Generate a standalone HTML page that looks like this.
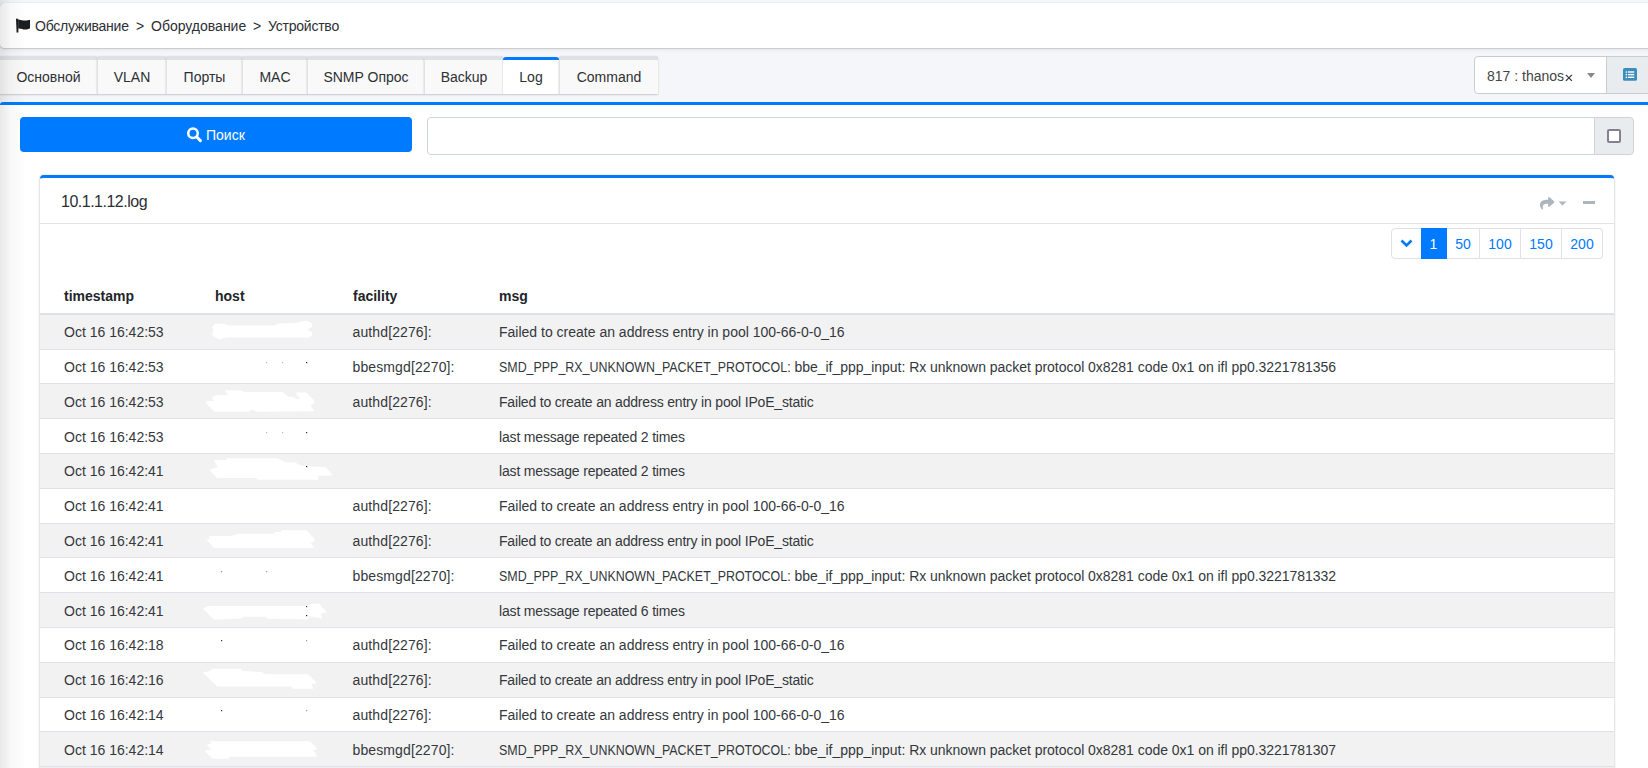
<!DOCTYPE html>
<html><head><meta charset="utf-8">
<style>
*{box-sizing:border-box;margin:0;padding:0}
html,body{width:1648px;height:768px;overflow:hidden}
body{background:#fff;font-family:"Liberation Sans",sans-serif;font-size:14px;color:#212529;position:relative}
.abs{position:absolute}
#topbg{left:0;top:0;width:1648px;height:105px;background:#f4f6f9}
#crumb{left:0;top:3px;width:1660px;height:45px;background:#fff;border-radius:4px;box-shadow:0 0 1px rgba(0,0,0,.3),0 1px 1px rgba(0,0,0,.12),0 2px 4px rgba(0,0,0,.06)}
#crumb .t{position:absolute;left:35px;top:15px;line-height:16px;white-space:pre;color:#2c3034}
.tab{position:absolute;top:56px;height:38px;background:#f9f9f9;border-top:4px solid #dee1e5;border-radius:3px 3px 0 0;box-shadow:0 0 1px rgba(0,0,0,.15),0 1px 2px rgba(0,0,0,.18);text-align:center;line-height:16px;padding-top:9px;color:#2c3034}
.tab.sep{border-left:1px solid #e2e2e2}
.tab.act{background:#fff;border-top-color:#007bff;top:57px;height:37px;border-top-width:3px}
#blue{left:0;top:102px;width:1648px;height:3px;background:#007bff;border-radius:3px 0 0 0}
#content{left:0;top:105px;width:1648px;height:663px;background:#fff}
#leftshade{left:0;top:0;width:26px;height:768px;background:linear-gradient(to right,rgba(0,0,0,.09),rgba(0,0,0,.03) 40%,rgba(0,0,0,0));pointer-events:none;z-index:50}
#sel{left:1474px;top:56px;width:133px;height:38px;background:#fff;border:1px solid #c9cdd2;border-radius:4px 0 0 4px}
#sel .v{position:absolute;left:12px;top:11px;line-height:16px;color:#444;white-space:pre}
#sel .car{position:absolute;left:112px;top:16px;width:0;height:0;border-left:4px solid transparent;border-right:4px solid transparent;border-top:5px solid #888}
#seladd{left:1606px;top:56px;width:50px;height:38px;background:#e9ecef;border:1px solid #c9cdd2}
#btn{left:20px;top:117px;width:392px;height:35px;background:#007bff;border-radius:4px;color:#fff}
#btn .t{position:absolute;left:186px;top:10px;line-height:16px}
#inp{left:427px;top:117px;width:1168px;height:38px;background:#fff;border:1px solid #ced4da;border-radius:4px 0 0 4px}
#inpadd{left:1594px;top:117px;width:40px;height:38px;background:#e9ecef;border:1px solid #ced4da;border-radius:0 4px 4px 0}
#chk{position:absolute;left:12px;top:11px;width:14px;height:14px;border:2px solid #85828f;border-radius:2px;background:#fff}
#card{left:40px;top:175px;width:1574px;height:620px;background:#fff;border-top:3px solid #007bff;border-radius:4px 4px 0 0;box-shadow:0 0 1px rgba(0,0,0,.3),0 1px 3px rgba(0,0,0,.2)}
#ctitle{position:absolute;left:21px;top:14px;font-size:16px;letter-spacing:-0.5px;line-height:20px;color:#2c3034;white-space:pre}
#chead{position:absolute;left:0;top:45px;width:100%;height:1px;background:#e3e3e3}
.pg{position:absolute;top:50px;height:31px;border:1px solid #dee2e6;border-left:none;color:#007bff;text-align:center;line-height:16px;padding-top:7px}
.th{position:absolute;top:110px;font-weight:bold;line-height:16px}
#thb{position:absolute;left:0;top:135px;width:100%;height:2px;background:#dee2e6}
.row{position:absolute;left:0;width:100%;border-top:1px solid #dee2e6}
.row.g{background:#f2f2f2}
.c{position:absolute;top:9px;line-height:16px;white-space:pre;color:#34383c}
.blob{position:absolute;background:#fff;border-radius:6px}
.up{display:inline-block;transform:scaleX(0.8875);transform-origin:0 0;width:291.6px}
.rest{letter-spacing:-0.03px}
.ipoe{letter-spacing:-0.19px}
.lastm{letter-spacing:-0.17px}
</style></head>
<body>
<div id="topbg" class="abs"></div>
<div id="crumb" class="abs">
  <svg class="abs" style="left:15px;top:15px" width="16" height="16" viewBox="0 0 16 16"><path d="M1 1.2 Q1 0.6 1.8 0.6 Q2.8 0.6 3.4 1.4 L3.4 14.6 L1.6 14.6 Z" fill="#1b1e21"/><path d="M3.2 1.8 C6 1.2 7.5 2.8 10 2.6 C12 2.5 13.5 2 15 2 L15 10.4 C13.5 10.5 12 11.6 10 11.6 C7.5 11.6 6 10.2 3.2 10.6 Z" fill="#1b1e21"/></svg>
  <div class="t" style="left:35px;letter-spacing:-0.25px">Обслуживание</div>
  <div class="t" style="left:136px">&gt;</div>
  <div class="t" style="left:151px">Оборудование</div>
  <div class="t" style="left:253px">&gt;</div>
  <div class="t" style="left:268px;letter-spacing:-0.23px">Устройство</div>
</div>
<div class="tab" style="left:0;width:97px">Основной</div>
<div class="tab sep" style="left:97px;width:69px">VLAN</div>
<div class="tab sep" style="left:166px;width:76px">Порты</div>
<div class="tab sep" style="left:242px;width:65px">MAC</div>
<div class="tab sep" style="left:307px;width:117px">SNMP Опрос</div>
<div class="tab sep" style="left:424px;width:79px">Backup</div>
<div class="tab act" style="left:503px;width:56px">Log</div>
<div class="tab sep" style="left:559px;width:99px">Command</div>
<div id="sel" class="abs"><div class="v">817 : thanos</div><svg style="position:absolute;left:90px;top:16.6px" width="8" height="8" viewBox="0 0 8 8"><path d="M0.9 0.9 L6.9 6.9 M6.9 0.9 L0.9 6.9" stroke="#3a3a3a" stroke-width="1.3"/></svg><div class="car"></div></div>
<div id="seladd" class="abs">
 <svg style="position:absolute;left:16px;top:11px" width="14" height="13" viewBox="0 0 14 13"><rect x="0" y="0" width="14" height="12.8" rx="1.6" fill="#3c8dbc"/><circle cx="3.4" cy="4" r="0.85" fill="#fff"/><circle cx="3.4" cy="6.6" r="0.85" fill="#fff"/><circle cx="3.4" cy="9.3" r="0.85" fill="#fff"/><rect x="5" y="3.3" width="6.2" height="1.4" fill="#fff"/><rect x="5" y="5.9" width="6.2" height="1.4" fill="#fff"/><rect x="5" y="8.6" width="6.2" height="1.4" fill="#fff"/></svg>
</div>
<div id="blue" class="abs"></div>
<div id="content" class="abs"></div>

<div id="btn" class="abs"><svg style="position:absolute;left:167px;top:10px" width="16" height="16" viewBox="0 0 16 16"><circle cx="6" cy="6.2" r="4.75" fill="none" stroke="#fff" stroke-width="2.5"/><path d="M9.6 9.8 L13.4 13.6" stroke="#fff" stroke-width="3" stroke-linecap="round"/></svg><div class="t">Поиск</div></div>
<div id="inp" class="abs"></div>
<div id="inpadd" class="abs"><div id="chk"></div></div>
<div id="card" class="abs">
 <div id="ctitle">10.1.1.12.log</div>
 <svg style="position:absolute;left:1500px;top:17.6px" width="14.5" height="14.5" viewBox="0 0 512 512"><path d="M503.691 189.836L327.687 37.851C312.281 24.546 288 35.347 288 56.015v80.053C127.371 137.907 0 170.1 0 322.326c0 61.441 39.581 122.309 83.333 154.132 13.653 9.931 33.111-2.533 28.077-18.631C66.066 312.814 132.917 274.316 288 272.085V360c0 20.7 24.3 31.453 39.687 18.164l176.004-152c11.071-9.562 11.086-26.753 0-36.328z" fill="#adb5bd"/></svg><svg style="position:absolute;left:1518px;top:22.5px" width="9" height="5" viewBox="0 0 9 5"><path d="M0.5 0.5 L8.5 0.5 L4.5 4.5 Z" fill="#adb5bd"/></svg>
 <div style="position:absolute;left:1543px;top:23px;width:12px;height:3px;background:#adb5bd"></div>
 <div id="chead"></div>
 <div class="pg" style="left:1351px;width:31px;border-left:1px solid #dee2e6;border-radius:4px 0 0 4px"><svg style="position:absolute;left:8px;top:10px" width="13" height="9" viewBox="0 0 13 9"><path d="M1.5 1.5 L6.5 6.5 L11.5 1.5" fill="none" stroke="#007bff" stroke-width="2.6"/></svg></div>
 <div class="pg" style="left:1381px;width:26px;background:#007bff;border-color:#007bff;color:#fff">1</div>
 <div class="pg" style="left:1407px;width:33px">50</div>
 <div class="pg" style="left:1440px;width:41px">100</div>
 <div class="pg" style="left:1481px;width:41px">150</div>
 <div class="pg" style="left:1522px;width:41px;border-radius:0 4px 4px 0">200</div>
 <div class="th" style="left:24px">timestamp</div>
 <div class="th" style="left:175px">host</div>
 <div class="th" style="left:313px">facility</div>
 <div class="th" style="left:459px">msg</div>
 <div id="thb"></div>
<div class="row g" style="top:137px;height:34px;border-top:none;"><div class="c" style="top:9px;left:24px">Oct 16 16:42:53</div><div class="c" style="top:9px;left:312.5px;letter-spacing:0.12px">authd[2276]:</div><div class="c" style="top:9px;left:459px">Failed to create an address entry in pool 100-66-0-0_16</div></div>
<div class="row" style="top:171px;height:34px;"><div class="c" style="top:9px;left:24px">Oct 16 16:42:53</div><div class="c" style="top:9px;left:312.5px;letter-spacing:0.12px">bbesmgd[2270]:</div><div class="c" style="top:9px;left:459px"><span class="up">SMD_PPP_RX_UNKNOWN_PACKET_PROTOCOL:</span> <span class="rest">bbe_if_ppp_input: Rx unknown packet protocol 0x8281 code 0x1 on ifl pp0.3221781356</span></div></div>
<div class="row g" style="top:205px;height:35px;"><div class="c" style="top:10px;left:24px">Oct 16 16:42:53</div><div class="c" style="top:10px;left:312.5px;letter-spacing:0.12px">authd[2276]:</div><div class="c ipoe" style="top:10px;left:459px">Failed to create an address entry in pool IPoE_static</div></div>
<div class="row" style="top:240px;height:35px;"><div class="c" style="top:10px;left:24px">Oct 16 16:42:53</div><div class="c" style="top:10px;left:312.5px;letter-spacing:0.12px"></div><div class="c lastm" style="top:10px;left:459px">last message repeated 2 times</div></div>
<div class="row g" style="top:275px;height:35px;"><div class="c" style="top:9px;left:24px">Oct 16 16:42:41</div><div class="c" style="top:9px;left:312.5px;letter-spacing:0.12px"></div><div class="c lastm" style="top:9px;left:459px">last message repeated 2 times</div></div>
<div class="row" style="top:310px;height:35px;"><div class="c" style="top:9px;left:24px">Oct 16 16:42:41</div><div class="c" style="top:9px;left:312.5px;letter-spacing:0.12px">authd[2276]:</div><div class="c" style="top:9px;left:459px">Failed to create an address entry in pool 100-66-0-0_16</div></div>
<div class="row g" style="top:345px;height:34px;"><div class="c" style="top:9px;left:24px">Oct 16 16:42:41</div><div class="c" style="top:9px;left:312.5px;letter-spacing:0.12px">authd[2276]:</div><div class="c ipoe" style="top:9px;left:459px">Failed to create an address entry in pool IPoE_static</div></div>
<div class="row" style="top:379px;height:35px;"><div class="c" style="top:10px;left:24px">Oct 16 16:42:41</div><div class="c" style="top:10px;left:312.5px;letter-spacing:0.12px">bbesmgd[2270]:</div><div class="c" style="top:10px;left:459px"><span class="up">SMD_PPP_RX_UNKNOWN_PACKET_PROTOCOL:</span> <span class="rest">bbe_if_ppp_input: Rx unknown packet protocol 0x8281 code 0x1 on ifl pp0.3221781332</span></div></div>
<div class="row g" style="top:414px;height:35px;"><div class="c" style="top:10px;left:24px">Oct 16 16:42:41</div><div class="c" style="top:10px;left:312.5px;letter-spacing:0.12px"></div><div class="c lastm" style="top:10px;left:459px">last message repeated 6 times</div></div>
<div class="row" style="top:449px;height:35px;"><div class="c" style="top:9px;left:24px">Oct 16 16:42:18</div><div class="c" style="top:9px;left:312.5px;letter-spacing:0.12px">authd[2276]:</div><div class="c" style="top:9px;left:459px">Failed to create an address entry in pool 100-66-0-0_16</div></div>
<div class="row g" style="top:484px;height:35px;"><div class="c" style="top:9px;left:24px">Oct 16 16:42:16</div><div class="c" style="top:9px;left:312.5px;letter-spacing:0.12px">authd[2276]:</div><div class="c ipoe" style="top:9px;left:459px">Failed to create an address entry in pool IPoE_static</div></div>
<div class="row" style="top:519px;height:34px;"><div class="c" style="top:9px;left:24px">Oct 16 16:42:14</div><div class="c" style="top:9px;left:312.5px;letter-spacing:0.12px">authd[2276]:</div><div class="c" style="top:9px;left:459px">Failed to create an address entry in pool 100-66-0-0_16</div></div>
<div class="row g" style="top:553px;height:35px;"><div class="c" style="top:10px;left:24px">Oct 16 16:42:14</div><div class="c" style="top:10px;left:312.5px;letter-spacing:0.12px">bbesmgd[2270]:</div><div class="c" style="top:10px;left:459px"><span class="up">SMD_PPP_RX_UNKNOWN_PACKET_PROTOCOL:</span> <span class="rest">bbe_if_ppp_input: Rx unknown packet protocol 0x8281 code 0x1 on ifl pp0.3221781307</span></div></div>
 <div class="row" style="top:588px;height:20px;background:#efefef"></div>
</div>
<svg class="abs" style="left:0;top:0;z-index:40" width="1648" height="768" viewBox="0 0 1648 768"><polygon fill="#fff" points="211.9,326.9 214.9,323.9 223.8,323.5 228.0,325.4 274.8,325.4 278.2,323.5 294.3,323.1 302.0,321.4 307.0,320.5 312.1,323.5 312.1,326.9 307.0,329.4 312.1,332.0 312.1,335.4 308.7,337.5 228.0,337.5 222.1,338.4 219.1,339.6 215.7,337.5 212.3,335.4 212.3,332.8 213.6,330.7"/><polygon fill="#fff" points="206.4,401.3 214.1,400.8 211.8,397.6 215.9,394.9 228.2,394.9 224.6,390.2 239.6,390.2 245.0,392.0 282.4,392.0 288.3,396.7 292.4,396.7 296.9,399.0 300.1,398.6 295.1,392.4 306.5,392.4 314.2,400.4 314.2,403.1 310.6,405.4 314.2,411.3 256.0,411.8 254.6,410.2 249.6,410.2 249.6,411.8 214.6,411.8 206.4,403.6"/><polygon fill="#fff" points="213.7,460.0 226.4,460.0 226.4,458.2 277.3,458.2 285.1,462.2 295.5,462.2 298.7,464.7 306.5,466.6 325.6,467.0 332.9,475.5 318.3,475.8 318.3,479.8 257.8,479.8 256.0,477.9 217.3,477.9 209.1,469.7 217.7,467.0"/><polygon fill="#fff" points="208.6,536.1 231.4,536.1 238.2,533.8 274.2,533.8 274.6,532.0 281.0,532.0 281.4,530.2 306.5,530.2 314.2,538.4 314.2,540.7 310.6,543.4 314.2,547.9 214.1,547.9 206.4,539.7 210.0,538.8"/><polygon fill="#fff" points="202.7,608.4 208.6,606.1 215.9,606.1 306.5,606.1 312.4,603.8 319.2,603.8 326.9,612.5 320.6,613.4 322.4,618.4 308.7,616.1 308.3,619.3 266.9,618.8 266.0,616.7 242.3,616.7 241.9,618.4 214.1,619.8"/><polygon fill="#fff" points="202.7,672.5 210.0,671.1 211.8,668.8 240.5,668.8 242.3,671.1 262.3,672.0 264.6,674.3 308.3,674.3 316.5,682.9 311.0,684.3 313.7,688.8 292.8,688.8 291.5,686.6 217.3,686.6"/><polygon fill="#fff" points="209.6,741.2 310.1,741.2 317.8,749.2 312.8,750.3 316.5,754.8 316.5,756.7 228.7,756.7 228.7,758.8 212.3,758.8 204.6,750.6 210.9,749.7 206.8,744.6 211.8,743.7"/><rect x="306" y="362" width="1.2" height="1.2" fill="#222"/><rect x="266" y="362" width="1.2" height="1.2" fill="#bbb"/><rect x="282" y="362" width="1.2" height="1.2" fill="#bbb"/><rect x="306" y="432" width="1.2" height="1.2" fill="#333"/><rect x="266" y="432" width="1.2" height="1.2" fill="#bbb"/><rect x="282" y="432" width="1.2" height="1.2" fill="#bbb"/><rect x="306" y="466" width="1.2" height="1.2" fill="#222"/><rect x="221" y="571" width="1.2" height="1.2" fill="#999"/><rect x="266" y="571" width="1.2" height="1.2" fill="#999"/><rect x="306" y="606" width="1.2" height="1.2" fill="#444"/><rect x="306" y="615" width="1.2" height="1.2" fill="#222"/><rect x="221" y="640" width="1.2" height="1.2" fill="#333"/><rect x="306" y="640" width="1.2" height="1.2" fill="#999"/><rect x="221" y="710" width="1.2" height="1.2" fill="#333"/><rect x="306" y="710" width="1.2" height="1.2" fill="#999"/></svg>
<div id="leftshade" class="abs"></div>
</body></html>
